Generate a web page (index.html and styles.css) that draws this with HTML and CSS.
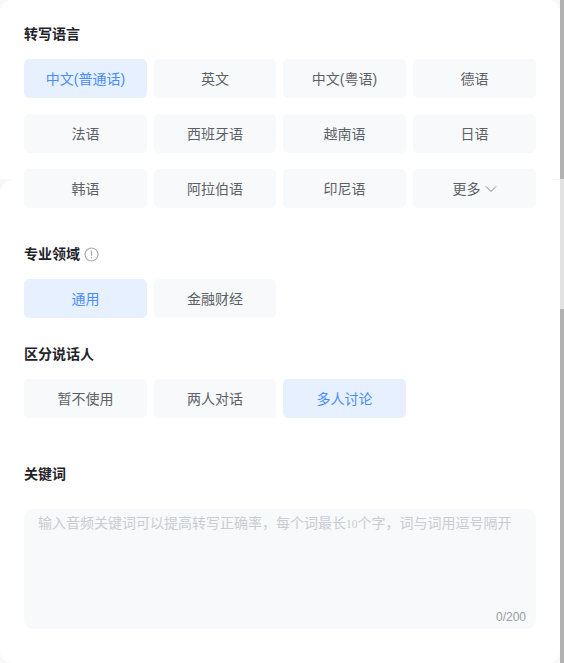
FILE: index.html
```html
<!DOCTYPE html>
<html lang="en">
<head>
    <meta charset="UTF-8">
    <meta name="viewport" content="width=device-width, initial-scale=1.0">
    <title>转写设置</title>
    <link rel="stylesheet" href="styles.css">
</head>
<body>
    <div class="window">
        <div class="sheet">
            <div class="seam"></div>
            <div class="seam-right"></div>

            <div class="title">转写语言</div>
            <div class="options options-lang">
                <button class="option active">中文(普通话)</button>
                <button class="option">英文</button>
                <button class="option">中文(粤语)</button>
                <button class="option">德语</button>
                <button class="option">法语</button>
                <button class="option">西班牙语</button>
                <button class="option">越南语</button>
                <button class="option">日语</button>
                <button class="option">韩语</button>
                <button class="option">阿拉伯语</button>
                <button class="option">印尼语</button>
                <button class="option">更多
                    <svg class="chevron" width="12" height="12" viewBox="0 0 12 12"><path d="M1 3.5 L6 8.5 L11 3.5" fill="none" stroke="#7d8288" stroke-width="1"/></svg>
                </button>
            </div>

            <div class="title title-domain">专业领域
                <svg class="info" width="15" height="15" viewBox="0 0 15 15">
                    <circle cx="7.5" cy="7.5" r="6.5" fill="none" stroke="#aaaaaa" stroke-width="1.2"/>
                    <path d="M7.5 3.6 V8.8 M7.5 10 V11.4" fill="none" stroke="#aaaaaa" stroke-width="1.3"/>
                </svg>
            </div>
            <div class="options">
                <button class="option active">通用</button>
                <button class="option">金融财经</button>
            </div>

            <div class="title title-speaker">区分说话人</div>
            <div class="options">
                <button class="option">暂不使用</button>
                <button class="option">两人对话</button>
                <button class="option active">多人讨论</button>
            </div>

            <div class="title title-keyword">关键词</div>
            <div class="keywords">
                <div class="placeholder">输入音频关键词可以提高转写正确率，每个词最长<span class="digits">10</span>个字，词与词用逗号隔开</div>
                <div class="count">0/200</div>
            </div>
        </div>

        <div class="scrollbar">
            <div class="thumb thumb-top"></div>
            <div class="track"></div>
            <div class="thumb thumb-bottom"></div>
        </div>
    </div>
</body>
</html>
```

FILE: styles.css
```css
html, body {
    margin: 0;
    height: 100%;
    overflow: hidden;
    background-color: #f8f8f8;
    font-family: "Liberation Sans", "Noto Sans CJK SC", sans-serif;
}

.window {
    display: flex;
    height: 663px;
}

.sheet {
    position: relative;
    flex: 1;
    padding: 24px 24px 0;
    background-color: white;
    border-radius: 12px;
}

/* edge of the second panel showing through */
.seam {
    position: absolute;
    left: 0;
    top: 179px;
    width: 13px;
    height: 13px;
    background: radial-gradient(circle at 100% 100%, white 12px, #f7f7f7 13px);
}

.seam-right {
    position: absolute;
    right: 0;
    top: 179px;
    width: 8px;
    height: 1px;
    background-color: #f6f6f6;
}

.title {
    display: flex;
    align-items: center;
    gap: 4px;
    box-sizing: border-box;
    height: 20px;
    padding-bottom: 2px;
    margin-bottom: 15px;
    font-size: 14px;
    font-weight: 700;
    color: #1f2329;
}

.title .info {
    margin-top: 2px;
}

.title-domain {
    margin-top: 36px;
}

.title-speaker {
    margin-top: 26px;
}

.title-keyword {
    margin-top: 46px;
    margin-bottom: 25px;
}

.options {
    display: grid;
    grid-template-columns: 123px 122px 123px 123px;
    gap: 16px 7px;
}

.option {
    display: flex;
    align-items: center;
    justify-content: center;
    gap: 4px;
    box-sizing: border-box;
    height: 39px;
    padding: 0 0 2px;
    border: none;
    border-radius: 5px;
    font-family: inherit;
    font-size: 14px;
    color: #5c6168;
    background-color: #f8f9fb;
}

.option .chevron {
    margin-top: 2px;
}

.option.active {
    color: #4a8cff;
    background-color: #e6f0ff;
}

.keywords {
    display: flex;
    flex-direction: column;
    justify-content: space-between;
    height: 120px;
    box-sizing: border-box;
    padding: 4px 10px 4px 14px;
    border-radius: 9px;
    background-color: #f8f9fb;
}

.placeholder {
    font-size: 14px;
    line-height: 20px;
    color: #c9ccd1;
}

.digits {
    font-family: "Liberation Serif", serif;
    font-size: 11.5px;
}

.count {
    align-self: flex-end;
    font-size: 12px;
    line-height: 16px;
    color: #9a9da3;
}

.scrollbar {
    display: flex;
    flex-direction: column;
    width: 4px;
}

.thumb {
    background-color: #b2b2b2;
}

.thumb-top {
    height: 179px;
}

.track {
    height: 130px;
    background-color: #e2e2e2;
}

.thumb-bottom {
    flex: 1;
}
```
